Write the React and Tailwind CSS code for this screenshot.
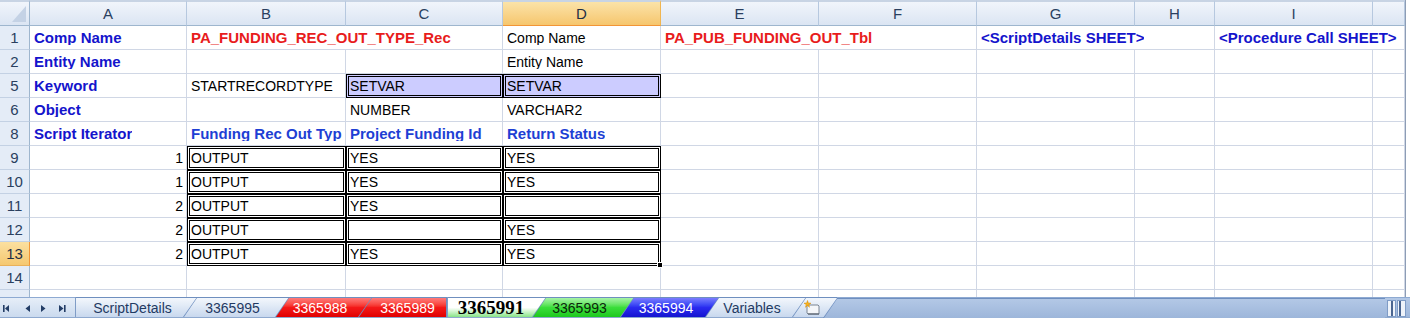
import React from 'react';

const COLS = ['A', 'B', 'C', 'D', 'E', 'F', 'G', 'H', 'I', ''];

const textStyle = {
  plain: 'text-[14px] text-black',
  lbl: 'text-[15px] font-bold text-[#1414cc]',
  red: 'text-[15px] font-bold text-[#e81c1c]',
  hdr: 'text-[15px] font-bold text-[#1e3fd4]',
};

const dataRow = (num) => [
  { t: num, right: true },
  { t: 'OUTPUT', box: true },
  { t: 'YES', box: true },
  { t: 'YES', box: true },
];

const rows = [
  {
    n: '1',
    cells: [
      { t: 'Comp Name', s: 'lbl' },
      { t: 'PA_FUNDING_REC_OUT_TYPE_Rec', s: 'red', span: 2 },
      { t: 'Comp Name' },
      { t: 'PA_PUB_FUNDING_OUT_Tbl', s: 'red', span: 2 },
      { t: '<ScriptDetails SHEET>', s: 'lbl', span: 2 },
      { t: '<Procedure Call SHEET>', s: 'lbl', span: 2 },
    ],
  },
  { n: '2', cells: [{ t: 'Entity Name', s: 'lbl' }, {}, {}, { t: 'Entity Name' }] },
  {
    n: '5',
    cells: [
      { t: 'Keyword', s: 'lbl' },
      { t: 'STARTRECORDTYPE' },
      { t: 'SETVAR', box: true, fill: true },
      { t: 'SETVAR', box: true, fill: true },
    ],
  },
  { n: '6', cells: [{ t: 'Object', s: 'lbl' }, {}, { t: 'NUMBER' }, { t: 'VARCHAR2' }] },
  {
    n: '8',
    cells: [
      { t: 'Script Iterator', s: 'lbl' },
      { t: 'Funding Rec Out Typ', s: 'hdr' },
      { t: 'Project Funding Id', s: 'hdr' },
      { t: 'Return Status', s: 'hdr' },
    ],
  },
  { n: '9', cells: dataRow('1') },
  { n: '10', cells: dataRow('1') },
  {
    n: '11',
    cells: [{ t: '2', right: true }, { t: 'OUTPUT', box: true }, { t: 'YES', box: true }, { t: '', box: true }],
  },
  {
    n: '12',
    cells: [{ t: '2', right: true }, { t: 'OUTPUT', box: true }, { t: '', box: true }, { t: 'YES', box: true }],
  },
  {
    n: '13',
    active: true,
    cells: [
      { t: '2', right: true },
      { t: 'OUTPUT', box: true },
      { t: 'YES', box: true },
      { t: 'YES', box: true, handle: true },
    ],
  },
  { n: '14', cells: [] },
];

// pad each row out to the 10 visible columns
const fillRow = (cells) => {
  const out = [...cells];
  let used = out.reduce((sum, c) => sum + (c.span || 1), 0);
  while (used < 10) {
    out.push({});
    used++;
  }
  return out;
};

function Cell({ c }) {
  const span = c.span === 2 ? 'col-span-2' : '';
  const frame = c.box
    ? `border-[3px] border-double border-black pl-px ${c.fill ? 'bg-[#ccccff]' : 'bg-white'}`
    : 'border-r border-b border-[#d0d7e5] pl-[4px] bg-white';
  const align = c.right ? 'justify-end pr-[3px]' : '';
  return (
    <div className={`relative h-[24px] box-border flex items-center whitespace-nowrap ${span} ${frame} ${align}`}>
      <span className={`overflow-hidden leading-none ${textStyle[c.s || 'plain']}`}>{c.t}</span>
      {c.handle && (
        <div className="absolute -right-[5px] -bottom-[5px] w-[6px] h-[6px] bg-black border border-white z-10" />
      )}
    </div>
  );
}

function RowHead({ n, active }) {
  return (
    <div
      className={`h-[24px] box-border flex items-center justify-center border-r border-b text-[15px] leading-none ${
        active
          ? 'bg-linear-to-b from-[#fbe0a0] to-[#f5c870] border-r-[#f29536] border-b-[#e9b15a] text-[#1e2e45]'
          : 'bg-[#e4ecf7] border-r-[#9eb6ce] border-b-[#c3d1e4] text-[#2a3f5f]'
      }`}
    >
      {n}
    </div>
  );
}

function Sheet() {
  return (
    <div className="flex">
      <div className="grid grid-cols-[30px_157px_159px_157px_158px_158px_158px_158px_80px_158px_32px] w-[1405px]">
        {/* column header row */}
        <div className="h-[26px] box-border border-t-2 border-t-[#c8d4e4] border-r border-r-[#9eb6ce] border-b border-b-[#9eb6ce] bg-linear-to-b from-[#f1f5fb] to-[#dbe5f3] flex items-end justify-end">
          <svg width="16" height="18" viewBox="0 0 16 18" className="mr-[2px] mb-[2px]">
            <path d="M1 17 L15 17 L15 1 Z" fill="#c4d2e5" />
          </svg>
        </div>
        {COLS.map((l, i) => (
          <div
            key={i}
            className={`h-[26px] box-border border-t-2 border-t-[#c8d4e4] border-r border-b flex items-center justify-center text-[15px] leading-none ${
              l === 'D'
                ? 'bg-linear-to-b from-[#fbe3a8] to-[#f6c66d] border-r-[#f0b550] border-b-[#f29536] text-[#1e2e45]'
                : 'bg-linear-to-b from-[#f1f5fb] to-[#dbe5f3] border-r-[#b6c8df] border-b-[#9eb6ce] text-[#2a3f5f]'
            }`}
          >
            {l}
          </div>
        ))}

        {rows.map((r) => (
          <React.Fragment key={r.n}>
            <RowHead n={r.n} active={r.active} />
            {fillRow(r.cells).map((c, i) => (
              <Cell key={i} c={c} />
            ))}
          </React.Fragment>
        ))}

        {/* partly visible row 15 */}
        <div className="h-[7px] bg-[#e4ecf7] border-r border-r-[#9eb6ce]" />
        {COLS.map((_, i) => (
          <div key={i} className="h-[7px] bg-white border-r border-[#d0d7e5]" />
        ))}
      </div>
      <div className="flex-1 bg-white border-l border-[#8d9db5]" />
    </div>
  );
}

const tabs = [
  { label: 'ScriptDetails', w: 122, ml: 0, slant: false, tone: 'plain', pad: 'pl-[6px] pr-[14px]' },
  { label: '3365995', w: 106, ml: -14, slant: true, tone: 'plain', pad: 'pl-[10px] pr-[18px]' },
  { label: '3365988', w: 97, ml: -14, slant: true, tone: 'red', pad: 'pl-[10px] pr-[18px]' },
  { label: '3365989', w: 89, ml: -14, slant: true, tone: 'red', pad: 'pl-[14px] pr-[4px]' },
  { label: '3365991', w: 99, ml: 0, slant: false, tone: 'active', pad: 'pl-[2px] pr-[14px]' },
  { label: '3365993', w: 102, ml: -14, slant: true, tone: 'green', pad: 'pl-[10px] pr-[18px]' },
  { label: '3365994', w: 99, ml: -14, slant: true, tone: 'blue', pad: 'pl-[10px] pr-[18px]' },
  { label: 'Variables', w: 101, ml: -14, slant: true, tone: 'plain', pad: 'pl-[10px] pr-[18px]' },
];

const toneClass = {
  plain: 'bg-linear-to-b from-[#f3f7fc] to-[#c8d8ee] text-[#1f3a63] text-[14px]',
  red: 'bg-linear-to-b from-[#ff7a7a] via-[#f41818] to-[#e00000] text-white text-[14px]',
  active: "bg-linear-to-b from-white via-white to-[#86e486] text-black text-[19px] font-bold font-['Liberation_Serif',serif]",
  green: 'bg-linear-to-b from-[#a6f4a6] via-[#3ade3a] to-[#1cc81c] text-[#0c260c] text-[14px]',
  blue: 'bg-linear-to-b from-[#7b7bff] via-[#2a2af0] to-[#1414d0] text-white text-[14px]',
};

function Tab({ tab }) {
  const clip = tab.slant ? '[clip-path:polygon(0_100%,14px_0,100%_0,100%_100%)]' : '';
  const innerClip = tab.slant ? '[clip-path:polygon(0_100%,13px_0,100%_0,100%_100%)]' : '';
  const edge = tab.label === '3365989' ? 'pr-px' : '';
  return (
    <div
      className={`h-[20px] box-border pt-px ${tab.slant ? 'pl-px' : 'border-l border-[#7f9cc6]'} bg-[#6f8fbf] ${clip} ${edge}`}
      style={{ width: tab.w, marginLeft: tab.ml }}
    >
      <div className={`h-full flex items-center justify-center leading-none ${toneClass[tab.tone]} ${innerClip} ${tab.pad}`}>
        {tab.label}
      </div>
    </div>
  );
}

function NavIcons() {
  return (
    <div className="w-[75px] h-[20px] flex items-center bg-linear-to-b from-[#e6eef8] to-[#c9d9ee]">
      <svg width="75" height="20" viewBox="0 0 75 20">
        <rect x="3" y="7" width="1.6" height="7" fill="#233d66" />
        <path d="M9 7 L9 14 L5 10.5 Z" fill="#233d66" />
        <path d="M30 7 L30 14 L25.5 10.5 Z" fill="#233d66" />
        <path d="M41 7 L41 14 L45.5 10.5 Z" fill="#233d66" />
        <path d="M59 7 L59 14 L63.5 10.5 Z" fill="#233d66" />
        <rect x="64" y="7" width="1.6" height="7" fill="#233d66" />
      </svg>
    </div>
  );
}

function TabBar() {
  return (
    <div className="flex flex-col">
      <div className="flex h-[20px] border-t border-[#8eaad2]">
        <NavIcons />
        <div className="flex items-end">
          {tabs.map((t) => (
            <Tab key={t.label} tab={t} />
          ))}
          <div className="h-[20px] w-[45px] box-border pt-px pl-px bg-[#6f8fbf] -ml-[14px] [clip-path:polygon(0_100%,14px_0,100%_0,100%_100%)]">
            <div className="h-full flex items-center pl-[10px] bg-linear-to-b from-[#f3f7fc] to-[#c8d8ee] [clip-path:polygon(0_100%,13px_0,100%_0,100%_100%)]">
              <svg width="18" height="16" viewBox="0 0 18 16">
                <path d="M4 5 L15 5 L16 6 L16 14 L5 14 L4 13 Z" fill="#f4f6f9" stroke="#7b8593" strokeWidth="1" />
                <path d="M5 14 L16 14" stroke="#4c5663" strokeWidth="1.2" />
                <path d="M4.5 0.5 L5.3 3 L8 3.2 L5.8 4.6 L6.5 7.3 L4.5 5.6 L2.5 7.3 L3.2 4.6 L1 3.2 L3.7 3 Z" fill="#f7b21e" stroke="#d98a00" strokeWidth="0.5" />
              </svg>
            </div>
          </div>
        </div>
        <div className="flex-1 -ml-[14px] h-[20px] bg-[#6f8fbf] pt-px pl-px [clip-path:polygon(0_100%,14px_0,100%_0,100%_100%)]">
          <div className="h-full bg-linear-to-b from-[#b3c8e6] to-[#9db6da] [clip-path:polygon(0_100%,13px_0,100%_0,100%_100%)]" />
        </div>
        <div className="w-[25px] h-[20px] flex items-center gap-px pl-[2px] bg-linear-to-b from-[#b3c8e6] to-[#9db6da]">
          <div className="w-[9px] h-[17px] bg-[#eef3fa] border border-[#7f9cc6] flex justify-center">
            <div className="w-[2px] h-full bg-[#4a6590]" />
          </div>
          <div className="w-[9px] h-[17px] bg-[#eef3fa] border border-[#7f9cc6] flex justify-start pl-px">
            <div className="w-[2px] h-full bg-[#4a6590]" />
          </div>
        </div>
      </div>
      <div className="h-px bg-[#8ea9cf]" />
    </div>
  );
}

export default function App() {
  return (
    <div className="w-[1410px] h-[318px] overflow-hidden bg-white font-['Liberation_Sans',Arial,sans-serif]">
      <Sheet />
      <TabBar />
    </div>
  );
}
